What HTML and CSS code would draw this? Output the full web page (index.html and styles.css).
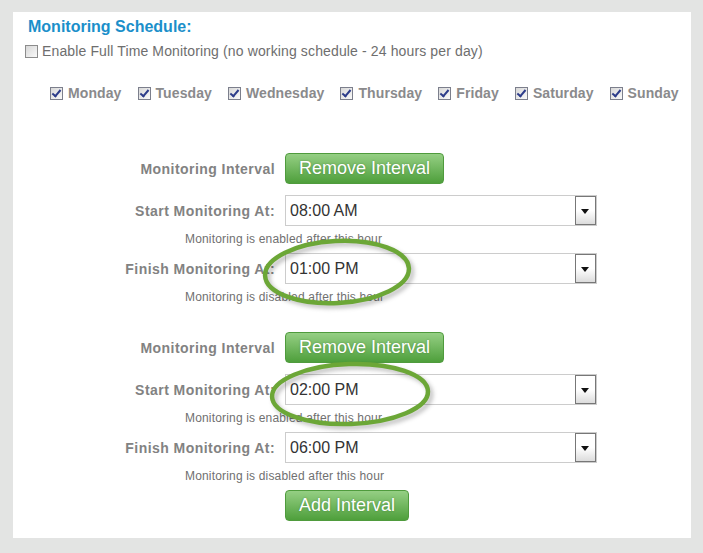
FILE: index.html
```html
<!DOCTYPE html>
<html lang="en">
<head>
    <meta charset="UTF-8">
    <title>Monitoring Schedule</title>
    <link rel="stylesheet" href="styles.css">
</head>
<body>
    <div class="panel">
        <h2 class="title">Monitoring Schedule:</h2>
        <div class="fulltime">
            <span class="box"></span>
            <span>Enable Full Time Monitoring (no working schedule - 24 hours per day)</span>
        </div>
        <div class="days">
            <span class="day"><span class="box checked"></span>Monday</span>
            <span class="day"><span class="box checked"></span>Tuesday</span>
            <span class="day"><span class="box checked"></span>Wednesday</span>
            <span class="day"><span class="box checked"></span>Thursday</span>
            <span class="day"><span class="box checked"></span>Friday</span>
            <span class="day"><span class="box checked"></span>Saturday</span>
            <span class="day"><span class="box checked"></span>Sunday</span>
        </div>

        <div class="interval first">
            <div class="row">
                <span class="label">Monitoring Interval</span>
                <span class="btn">Remove Interval</span>
            </div>
            <div class="row gap">
                <span class="label">Start Monitoring At:</span>
                <span class="select">08:00 AM<span class="arrow"></span></span>
            </div>
            <div class="hint">Monitoring is enabled after this hour</div>
            <div class="row">
                <span class="label">Finish Monitoring At:</span>
                <span class="select">01:00 PM<span class="arrow"></span></span>
            </div>
            <div class="hint">Monitoring is disabled after this hour</div>
        </div>

        <div class="interval">
            <div class="row">
                <span class="label">Monitoring Interval</span>
                <span class="btn">Remove Interval</span>
            </div>
            <div class="row gap">
                <span class="label">Start Monitoring At:</span>
                <span class="select">02:00 PM<span class="arrow"></span></span>
            </div>
            <div class="hint">Monitoring is enabled after this hour</div>
            <div class="row">
                <span class="label">Finish Monitoring At:</span>
                <span class="select">06:00 PM<span class="arrow"></span></span>
            </div>
            <div class="hint">Monitoring is disabled after this hour</div>
            <div class="row">
                <span class="label"></span>
                <span class="btn">Add Interval</span>
            </div>
        </div>

        <!-- annotation rings drawn over the form -->
        <svg class="ring ring-one" width="160" height="80" viewBox="0 0 160 80">
            <ellipse cx="77" cy="36" rx="72" ry="31" transform="rotate(-3 77 36)" class="ring-shadow"/>
            <ellipse cx="74" cy="33" rx="72" ry="31" transform="rotate(-3 74 33)" class="ring-line"/>
        </svg>
        <svg class="ring ring-two" width="175" height="80" viewBox="0 0 175 80">
            <ellipse cx="83" cy="36" rx="78" ry="30" transform="rotate(-2 83 36)" class="ring-shadow"/>
            <ellipse cx="80" cy="33" rx="78" ry="30" transform="rotate(-2 80 33)" class="ring-line"/>
        </svg>
    </div>
</body>
</html>
```

FILE: styles.css
```css
body {
    margin: 0;
    background-color: #e3e4e3;
    font-family: Arial, "Liberation Sans", sans-serif;
}
.panel {
    position: relative;
    width: 678px;
    height: 524px;
    margin: 12px 0 0 13px;
    padding-top: 2px;
    background-color: #ffffff;
}
.title {
    margin: 3px 0 0 15px;
    font-size: 16px;
    line-height: 20px;
    font-weight: bold;
    color: #1b8fca;
}
.fulltime {
    display: flex;
    align-items: center;
    gap: 4px;
    margin: 5px 0 0 12px;
    font-size: 14px;
    line-height: 18px;
    letter-spacing: 0.13px;
    color: #6e6e6e;
}
.days {
    display: flex;
    align-items: center;
    gap: 16px;
    margin: 24px 0 0 37px;
}
.day {
    display: flex;
    align-items: center;
    gap: 5px;
    font-size: 14px;
    line-height: 18px;
    font-weight: bold;
    letter-spacing: 0.1px;
    color: #8a8a8c;
}
.box {
    display: inline-block;
    box-sizing: border-box;
    width: 13px;
    height: 13px;
    border: 1px solid #8c8c8c;
    background: linear-gradient(135deg, #d8d8d8, #f9f9f9);
    position: relative;
}
.box.checked {
    border-color: #7c7f8c;
}
.box.checked::after {
    content: "";
    position: absolute;
    left: 3px;
    top: 0px;
    width: 3px;
    height: 7px;
    border: solid #2c3c8a;
    border-width: 0 2px 2px 0;
    transform: rotate(40deg);
}
.interval {
    margin-top: 21px;
}
.interval.first {
    margin-top: 51px;
}
.row {
    display: grid;
    grid-template-columns: 262px auto;
    column-gap: 10px;
    align-items: center;
    justify-items: start;
}
.row.gap {
    margin-top: 11px;
}
.label {
    justify-self: end;
    font-size: 14px;
    font-weight: bold;
    letter-spacing: 0.45px;
    color: #828282;
}
.btn {
    box-sizing: border-box;
    height: 31px;
    padding: 0 13px;
    border: 1px solid #4f9b3d;
    border-radius: 4px;
    background: linear-gradient(#95cf84, #4e9f3b);
    color: #ffffff;
    font-size: 18px;
    line-height: 29px;
    text-shadow: 0 0 2px rgba(0, 60, 0, 0.35);
}
.select {
    position: relative;
    box-sizing: border-box;
    width: 312px;
    height: 31px;
    padding-left: 4px;
    border: 1px solid #cccccc;
    font-size: 16px;
    line-height: 29px;
    color: #333333;
}
.arrow {
    position: absolute;
    right: 0;
    top: 0;
    box-sizing: border-box;
    width: 21px;
    height: 29px;
    border: 1px solid #777777;
    background: linear-gradient(#ffffff 50%, #dcdcdc);
}
.arrow::after {
    content: "";
    position: absolute;
    left: 5px;
    top: 12px;
    border-left: 4px solid transparent;
    border-right: 4px solid transparent;
    border-top: 5px solid #111111;
}
.hint {
    height: 27px;
    padding-left: 172px;
    font-size: 12px;
    line-height: 27px;
    letter-spacing: 0.17px;
    color: #707070;
}
.ring {
    position: absolute;
    overflow: visible;
}
.ring-one {
    left: 250px;
    top: 227px;
}
.ring-two {
    left: 257px;
    top: 349px;
}
.ring-line {
    fill: none;
    stroke: #6ca737;
    stroke-width: 4.5;
}
.ring-shadow {
    fill: none;
    stroke: rgba(0, 0, 0, 0.25);
    stroke-width: 4.5;
    filter: blur(2px);
}
```
